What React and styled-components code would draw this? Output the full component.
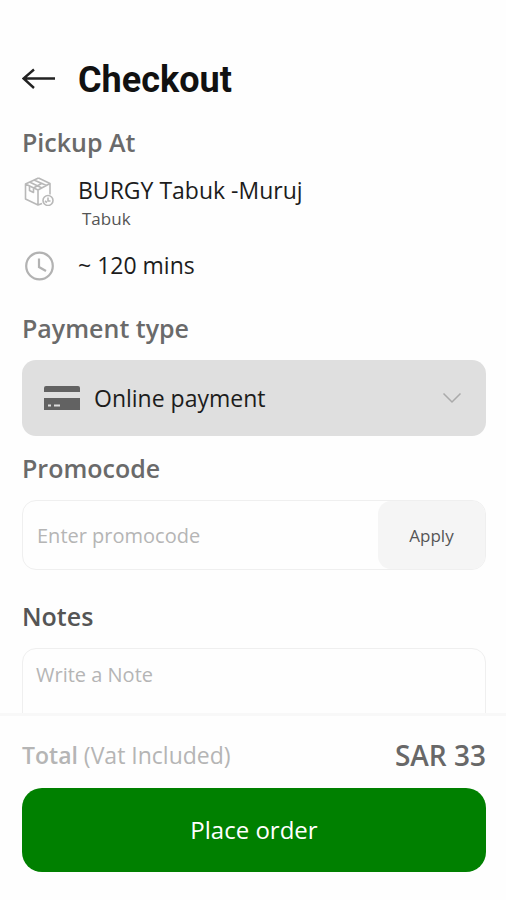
import React from "react";
import styled, { createGlobalStyle } from "styled-components";

const GlobalStyle = createGlobalStyle`
  *, *::before, *::after { box-sizing: border-box; }
  body { margin: 0; background: #fefefe; }
  body, button, input, select, textarea {
    font-family: "Open Sans", "Noto Sans", sans-serif;
  }
`;

const Page = styled.div`
  display: flex;
  flex-direction: column;
  height: 100vh;
`;

const Content = styled.main`
  flex: 1;
  min-height: 0;
  overflow-y: auto;
  scrollbar-width: none;
  padding: 55px 20px 0 22px;
`;

const Header = styled.header`
  display: flex;
  align-items: center;
  gap: 22px;
  height: 48px;
  margin-bottom: 23px;
`;

const BackButton = styled.button`
  display: flex;
  padding: 0;
  border: 0;
  background: none;
  cursor: pointer;
`;

const PageTitle = styled.h1`
  margin: 0;
  padding-top: 2px;
  font: 700 36px/48px Roboto, sans-serif;
  color: #111;
`;

const Section = styled.section`
  margin-bottom: ${({ $gap }) => $gap}px;
`;

const SectionTitle = styled.h2`
  margin: 0 0 16px;
  font-size: 25px;
  font-weight: 600;
  line-height: 32px;
  color: ${({ $dark }) => ($dark ? "#555" : "#6a6a6a")};
`;

const InfoRow = styled.div`
  display: grid;
  grid-template-columns: 34px 1fr;
  column-gap: 22px;
  align-items: center;
  margin-bottom: ${({ $gap = 0 }) => $gap}px;
`;

const InfoText = styled.p`
  margin: 0;
  font-size: 23px;
  line-height: 32px;
  color: #1c1c1c;
`;

const InfoDetail = styled.p`
  margin: 0;
  padding-left: 4px;
  font-size: 17px;
  line-height: 26px;
  color: #555;
`;

const SelectField = styled.label`
  display: grid;
  grid-template-columns: 36px 1fr 20px;
  column-gap: 14px;
  align-items: center;
  height: 76px;
  padding: 0 24px 0 22px;
  border-radius: 14px;
  background: #dfdfdf;
`;

const PaymentSelect = styled.select`
  appearance: none;
  width: 100%;
  height: 76px;
  padding: 0;
  border: 0;
  background: none;
  font-size: 23px;
  color: #1c1c1c;
`;

const PromoField = styled.form`
  display: flex;
  height: 70px;
  border: 1px solid #efefef;
  border-radius: 14px;
`;

const PromoInput = styled.input`
  flex: 1;
  min-width: 0;
  padding: 0 14px;
  border: 0;
  background: none;
  font-size: 20px;
  color: #1c1c1c;
  &::placeholder { color: #b5b5b5; opacity: 1; }
`;

const ApplyButton = styled.button`
  width: 107px;
  border: 0;
  border-radius: 13px;
  background: #f5f5f5;
  font-size: 17px;
  color: #555;
  cursor: pointer;
`;

const NoteInput = styled.textarea`
  display: block;
  width: 100%;
  height: 120px;
  padding: 12px 13px;
  border: 1px solid #efefef;
  border-radius: 14px;
  background: none;
  resize: none;
  font-size: 20px;
  line-height: 28px;
  color: #1c1c1c;
  &::placeholder { color: #b5b5b5; opacity: 1; }
`;

const Footer = styled.footer`
  padding: 23px 20px 28px 22px;
  border-top: 3px solid #f8f8f8;
  background: #fefefe;
`;

const TotalRow = styled.div`
  display: flex;
  justify-content: space-between;
  align-items: center;
  height: 32px;
  margin-bottom: 17px;
`;

const TotalLabel = styled.span`
  font-size: 23px;
  color: #b5b5b5;
`;

const TotalStrong = styled.strong`
  font-weight: 600;
`;

const TotalAmount = styled.span`
  font-size: 28px;
  font-weight: 600;
  color: #686868;
`;

const PlaceOrderButton = styled.button`
  display: block;
  width: 100%;
  height: 84px;
  padding: 0 0 2px;
  border: 0;
  border-radius: 20px;
  background: #008000;
  font-size: 24px;
  color: #fff;
  cursor: pointer;
`;

const BackIcon = () => (
  <svg width="34" height="24" viewBox="0 0 34 24" fill="none" stroke="#222" strokeWidth="2.4" aria-hidden="true">
    <path d="M33 11.5H1.5M12 2.5 1.5 11.5 12 21" />
  </svg>
);

const PackageIcon = () => (
  <svg width="34" height="32" viewBox="0 0 34 32" fill="none" stroke="#b8b8b8" strokeWidth="1.6" strokeLinejoin="round" aria-hidden="true">
    <path d="M16.500 4 3.500 10v15l12.500 6 4-1.500M3.500 10 16 16v15M16 16l12-6.500L16.500 4M28 9.500v11M7.500 8l12.500 6M12 6l12.500 5.500M7.500 12v4.500l4 2v-4.500l9-5" />
    <circle cx="26" cy="26.500" r="5" fill="#fefefe" />
    <path d="M26 23.500v3.500h2.500M23 27l2 1.500" />
  </svg>
);

const ClockIcon = () => (
  <svg width="34" height="32" viewBox="0 0 34 32" fill="none" stroke="#b2b2b2" strokeWidth="2.200" aria-hidden="true">
    <circle cx="17.500" cy="17" r="13.300" />
    <path d="M17 9.500v8.500l7 4" />
  </svg>
);

const CardIcon = () => (
  <svg width="36" height="26" viewBox="0 0 36 26" aria-hidden="true">
    <path d="M0 7V3q0-2 2-2h32q2 0 2 2v4zM0 13h36v12H0z" fill="#626262" />
    <path d="M4 20.500h3M10 20.500h6" stroke="#ddd" strokeWidth="1.800" />
  </svg>
);

const ChevronIcon = () => (
  <svg width="20" height="12" viewBox="0 0 20 12" fill="none" stroke="#aaa" strokeWidth="1.500" aria-hidden="true">
    <path d="m1.500 1.500 8.500 8.500 8.500-8.500" />
  </svg>
);

export default function App() {
  return (
    <>
      <GlobalStyle />
      <Page>
        <Content>
          <Header>
            <BackButton type="button" aria-label="Back">
              <BackIcon />
            </BackButton>
            <PageTitle>Checkout</PageTitle>
          </Header>

          <Section $gap={31}>
            <SectionTitle>Pickup At</SectionTitle>
            <InfoRow>
              <PackageIcon />
              <InfoText>BURGY Tabuk -Muruj</InfoText>
            </InfoRow>
            <InfoRow $gap={17}>
              <span />
              <InfoDetail>Tabuk</InfoDetail>
            </InfoRow>
            <InfoRow>
              <ClockIcon />
              <InfoText>~ 120 mins</InfoText>
            </InfoRow>
          </Section>

          <Section $gap={16}>
            <SectionTitle>Payment type</SectionTitle>
            <SelectField>
              <CardIcon />
              <PaymentSelect aria-label="Payment type" defaultValue="online">
                <option value="online">Online payment</option>
              </PaymentSelect>
              <ChevronIcon />
            </SelectField>
          </Section>

          <Section $gap={30}>
            <SectionTitle>Promocode</SectionTitle>
            <PromoField onSubmit={(event) => event.preventDefault()}>
              <PromoInput aria-label="Promocode" placeholder="Enter promocode" />
              <ApplyButton type="submit">Apply</ApplyButton>
            </PromoField>
          </Section>

          <Section $gap={16}>
            <SectionTitle $dark>Notes</SectionTitle>
            <NoteInput aria-label="Notes" placeholder="Write a Note" />
          </Section>
        </Content>

        <Footer>
          <TotalRow>
            <TotalLabel>
              <TotalStrong>Total</TotalStrong> (Vat Included)
            </TotalLabel>
            <TotalAmount>SAR 33</TotalAmount>
          </TotalRow>
          <PlaceOrderButton type="button">Place order</PlaceOrderButton>
        </Footer>
      </Page>
    </>
  );
}
